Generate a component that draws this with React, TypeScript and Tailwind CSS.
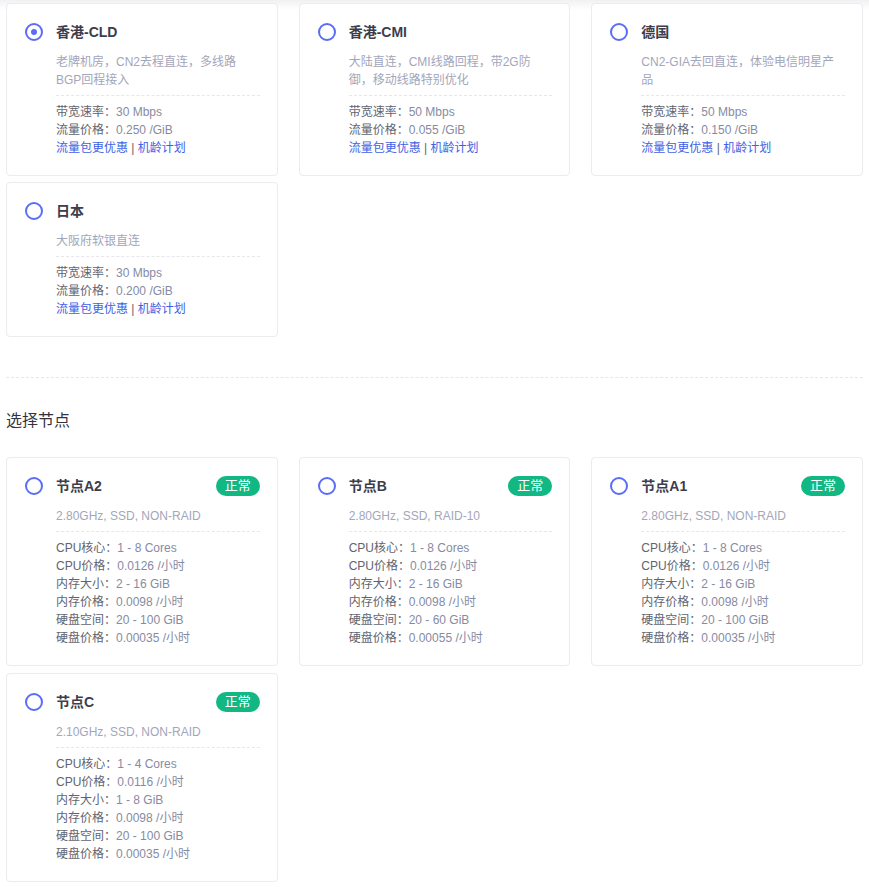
import React from "react";

type Line = { name: string; desc: string[]; bw: string; price: string; selected?: boolean };
type Node = { name: string; desc: string; specs: [string, string][] };

const lines: Line[] = [
  { name: "香港-CLD", desc: ["老牌机房，CN2去程直连，多线路", "BGP回程接入"], bw: "30 Mbps", price: "0.250 /GiB", selected: true },
  { name: "香港-CMI", desc: ["大陆直连，CMI线路回程，带2G防", "御，移动线路特别优化"], bw: "50 Mbps", price: "0.055 /GiB" },
  { name: "德国", desc: ["CN2-GIA去回直连，体验电信明星产", "品"], bw: "50 Mbps", price: "0.150 /GiB" },
  { name: "日本", desc: ["大阪府软银直连"], bw: "30 Mbps", price: "0.200 /GiB" },
];

const nodes: Node[] = [
  {
    name: "节点A2",
    desc: "2.80GHz, SSD, NON-RAID",
    specs: [
      ["CPU核心：", "1 - 8 Cores"],
      ["CPU价格：", "0.0126 /小时"],
      ["内存大小：", "2 - 16 GiB"],
      ["内存价格：", "0.0098 /小时"],
      ["硬盘空间：", "20 - 100 GiB"],
      ["硬盘价格：", "0.00035 /小时"],
    ],
  },
  {
    name: "节点B",
    desc: "2.80GHz, SSD, RAID-10",
    specs: [
      ["CPU核心：", "1 - 8 Cores"],
      ["CPU价格：", "0.0126 /小时"],
      ["内存大小：", "2 - 16 GiB"],
      ["内存价格：", "0.0098 /小时"],
      ["硬盘空间：", "20 - 60 GiB"],
      ["硬盘价格：", "0.00055 /小时"],
    ],
  },
  {
    name: "节点A1",
    desc: "2.80GHz, SSD, NON-RAID",
    specs: [
      ["CPU核心：", "1 - 8 Cores"],
      ["CPU价格：", "0.0126 /小时"],
      ["内存大小：", "2 - 16 GiB"],
      ["内存价格：", "0.0098 /小时"],
      ["硬盘空间：", "20 - 100 GiB"],
      ["硬盘价格：", "0.00035 /小时"],
    ],
  },
  {
    name: "节点C",
    desc: "2.10GHz, SSD, NON-RAID",
    specs: [
      ["CPU核心：", "1 - 4 Cores"],
      ["CPU价格：", "0.0116 /小时"],
      ["内存大小：", "1 - 8 GiB"],
      ["内存价格：", "0.0098 /小时"],
      ["硬盘空间：", "20 - 100 GiB"],
      ["硬盘价格：", "0.00035 /小时"],
    ],
  },
];

function Radio({ checked }: { checked?: boolean }) {
  return (
    <span className="flex h-[18px] w-[18px] shrink-0 items-center justify-center rounded-full border-2 border-[#5b6df7]">
      {checked && <span className="h-[6px] w-[6px] rounded-full bg-[#5b6df7]" />}
    </span>
  );
}

function Card({
  title,
  checked,
  badge,
  children,
}: {
  title: string;
  checked?: boolean;
  badge?: boolean;
  children: React.ReactNode;
}) {
  return (
    <div className="rounded-[4px] border border-[#ebebf0] bg-white pb-[18px] pl-[18px] pr-[17px] pt-[17px]">
      <div className="flex h-[22px] items-center">
        <Radio checked={checked} />
        <div className="ml-[13px] flex-1 text-[14px] font-bold leading-[22px] text-[#3d3d4d]">{title}</div>
        {badge && (
          <span className="flex h-[20px] items-center rounded-full bg-[#12b883] px-[9px] text-[13px] leading-[20px] text-white">
            正常
          </span>
        )}
      </div>
      <div className="ml-[31px]">{children}</div>
    </div>
  );
}

function Desc({ children }: { children: React.ReactNode }) {
  return <div className="mt-[10px] text-[12px] leading-[18px] text-[#a3a6ba]">{children}</div>;
}

function Divider() {
  return <div className="mb-[7px] mt-[6px] border-t border-dashed border-[#e6e6ec]" />;
}

function Spec({ label, value }: { label: string; value: string }) {
  return (
    <div className="text-[12px] leading-[18px]">
      <span className="text-[#61646f]">{label}</span>
      <span className="text-[#868ba2]">{value}</span>
    </div>
  );
}

export default function App() {
  return (
    <div
      className="min-h-[887px] bg-[linear-gradient(to_bottom,#f1f1f3,#ffffff_10px)] px-[6px] pt-[3px]"
      style={{ fontFamily: '"Liberation Sans", "Noto Sans CJK SC", Arial, sans-serif' }}
    >
      <div className="grid grid-cols-3 gap-x-[21px] gap-y-[6px]">
        {lines.map((l) => (
          <Card key={l.name} title={l.name} checked={l.selected}>
            <Desc>
              {l.desc.map((d, i) => (
                <div key={i}>{d}</div>
              ))}
            </Desc>
            <Divider />
            <Spec label="带宽速率：" value={l.bw} />
            <Spec label="流量价格：" value={l.price} />
            <div className="text-[12px] leading-[18px]">
              <span className="text-[#4161e3]">流量包更优惠</span>
              <span className="text-[#61646f]"> | </span>
              <span className="text-[#4161e3]">机龄计划</span>
            </div>
          </Card>
        ))}
      </div>

      <div className="mt-[40px] border-t border-dashed border-[#e6e6ec]" />

      <div className="mt-[31px] text-[16px] leading-[24px] text-[#333340]">选择节点</div>

      <div className="mt-[24px] grid grid-cols-3 gap-x-[21px] gap-y-[7px]">
        {nodes.map((n) => (
          <Card key={n.name} title={n.name} badge>
            <Desc>{n.desc}</Desc>
            <Divider />
            {n.specs.map(([a, b]) => (
              <Spec key={a} label={a} value={b} />
            ))}
          </Card>
        ))}
      </div>
    </div>
  );
}
